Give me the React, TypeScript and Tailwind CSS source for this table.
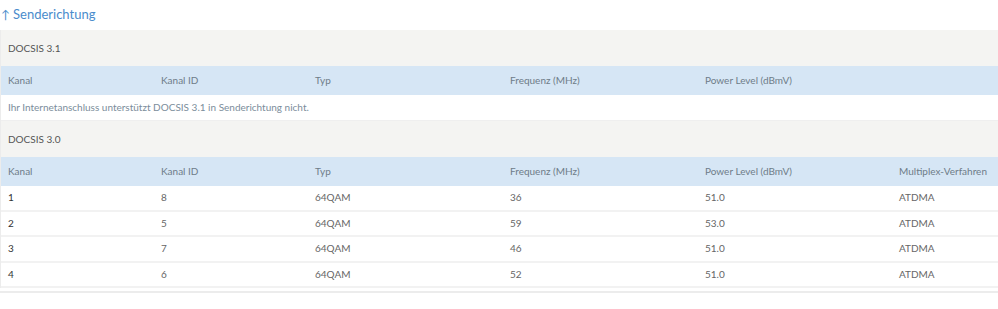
const font = { fontFamily: 'Lato, "Open Sans", sans-serif' };

const cols = ['w-[153px]', 'w-[154px]', 'w-[195px]', 'w-[195px]', 'w-[194px]', 'flex-1'];

function HeaderRow({ labels }: { labels: string[] }) {
  return (
    <div className="flex h-[29px] items-center bg-[#d6e6f5] pl-[7px] text-[10px] text-[#6e7c88]">
      {labels.map((l, i) => (
        <div key={i} className={cols[i]}>
          {l}
        </div>
      ))}
    </div>
  );
}

function GroupTitle({ title }: { title: string }) {
  return (
    <div className="flex h-[36px] items-center bg-[#f4f4f2] pl-[7px] text-[10px] text-[#555]">
      {title}
    </div>
  );
}

export default function App() {
  const rows = [
    ['1', '8', '64QAM', '36', '51.0', 'ATDMA'],
    ['2', '5', '64QAM', '59', '53.0', 'ATDMA'],
    ['3', '7', '64QAM', '46', '51.0', 'ATDMA'],
    ['4', '6', '64QAM', '52', '51.0', 'ATDMA'],
  ];

  return (
    <div className="h-[309px] w-[998px] bg-white" style={font}>
      <div className="flex h-[30px] items-center pl-[1px] text-[13px] text-[#4a8ccc]">
        <span className="mr-[3px] text-[12px]">↑</span>Senderichtung
      </div>

      <div className="border-b-2 border-[#ececec] pb-[3px]">
        <div className="border-l border-[#ececec]">
          <GroupTitle title="DOCSIS 3.1" />
          <HeaderRow labels={['Kanal', 'Kanal ID', 'Typ', 'Frequenz (MHz)', 'Power Level (dBmV)']} />
          <div className="flex h-[26px] items-center border-b border-[#efefef] pl-[7px] text-[10px] text-[#7b8d9b]">
            Ihr Internetanschluss unterstützt DOCSIS 3.1 in Senderichtung nicht.
          </div>

          <GroupTitle title="DOCSIS 3.0" />
          <HeaderRow
            labels={[
              'Kanal',
              'Kanal ID',
              'Typ',
              'Frequenz (MHz)',
              'Power Level (dBmV)',
              'Multiplex-Verfahren',
            ]}
          />
          {rows.map((r, ri) => (
            <div
              key={ri}
              className="flex h-[25.5px] items-center border-b-2 border-[#f2f2f2] pl-[7px] text-[10px] text-[#666]"
            >
              {r.map((c, i) => (
                <div key={i} className={`${cols[i]} ${i === 0 ? 'text-[#333]' : ''}`}>
                  {c}
                </div>
              ))}
            </div>
          ))}
        </div>
      </div>
    </div>
  );
}
